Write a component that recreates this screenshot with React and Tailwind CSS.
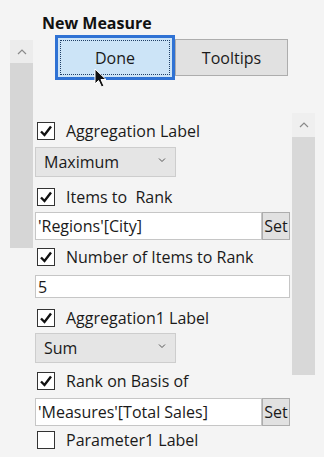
import React from 'react';

const font = { fontFamily: '"Open Sans", "Noto Sans", sans-serif' };

// Windows-style checkbox
const CheckRow = ({ label, checked = true, className = '' }) => (
    <div className={`flex items-center h-7 ${className}`}>
        <div className="w-[18px] h-[18px] ml-[2px] border border-[#333333] bg-white flex items-center justify-center">
            {checked && (
                <svg width="14" height="14" viewBox="0 0 14 14">
                    <path d="M2 7.5 L5.5 11 L12 2.5" fill="none" stroke="#111" strokeWidth="2.4" />
                </svg>
            )}
        </div>
        <span className="ml-[11px] text-[16px] text-[#1a1a1a] whitespace-pre">{label}</span>
    </div>
);

const Dropdown = ({ value, className = '' }) => (
    <div className={`w-[141px] h-[30px] flex items-center justify-between pl-[8px] pr-[9px] bg-[#e5e5e5] border border-[#cdcdcd] ${className}`}>
        <span className="text-[16px] text-[#1a1a1a]">{value}</span>
        <svg width="8" height="6" viewBox="0 0 8 6" className="-mt-[4px]">
            <path d="M1 1.5 L4 4.5 L7 1.5" fill="none" stroke="#555" strokeWidth="1" />
        </svg>
    </div>
);

const SetInput = ({ value, className = '' }) => (
    <div className={`flex h-[28px] ${className}`}>
        <div className="w-[227px] bg-white border border-[#c6c6c6] flex items-center pl-[2px] text-[16px] text-[#1a1a1a]">
            {value}
        </div>
        <div className="w-[28px] bg-[#e1e1e1] border border-[#adadad] flex items-center justify-center text-[16px] text-[#1a1a1a]">
            Set
        </div>
    </div>
);

const UpArrow = () => (
    <svg width="10" height="6" viewBox="0 0 10 6">
        <path d="M1 5 L5 1 L9 5" fill="none" stroke="#8a8a8a" strokeWidth="1.2" />
    </svg>
);

export default function App() {
    return (
        <div className="w-[324px] h-[457px] overflow-hidden bg-[#f4f4f4] flex pl-[10px]" style={font}>
            {/* outer scrollbar */}
            <div className="w-[23px] mt-[40px] flex flex-col">
                <div className="h-[23px] bg-[#ececec] flex items-center justify-center"><UpArrow /></div>
                <div className="h-[185px] bg-[#d6d6d6]" />
            </div>

            <div className="flex-1 pl-[2px]">
                <h1 className="pl-[7px] pt-[13px] text-[16px] leading-[21px] font-bold text-[#111]">New Measure</h1>

                <div className="flex items-center mt-[1px] ml-[20px]">
                    <div className="relative w-[120px] h-[45px] border-[3px] border-[#2f72d4] bg-[#cce4f7] p-[2px]">
                        <div className="w-full h-full border border-dotted border-[#1f3f66] flex items-center justify-center text-[16px] text-[#1a1a1a]">
                            Done
                        </div>
                        <svg className="absolute left-[36px] top-[30px]" width="14" height="21" viewBox="0 0 14 21">
                            <path d="M1 1 L1 16 L4.5 12.5 L7.5 19 L10 18 L7 11.5 L12 11.5 Z" fill="#111" stroke="#fff" strokeWidth="1" />
                        </svg>
                    </div>
                    <div className="w-[113px] h-[37px] bg-[#e1e1e1] border border-[#adadad] flex items-center justify-center text-[16px] text-[#1a1a1a]">
                        Tooltips
                    </div>
                </div>

                {/* inner pane */}
                <div className="flex">
                    <div className="w-[255px] pt-[37px] flex flex-col">
                        <CheckRow label="Aggregation Label" />
                        <Dropdown value="Maximum" className="mt-[2px]" />
                        <CheckRow label="Items to  Rank" className="mt-[6px]" />
                        <SetInput value="'Regions'[City]" className="mt-[1px]" />
                        <CheckRow label="Number of Items to Rank" className="mt-[3px]" />
                        <div className="mt-[4px] h-[23px] bg-white border border-[#c6c6c6] flex items-center pl-[2px] text-[16px] text-[#1a1a1a]">5</div>
                        <CheckRow label="Aggregation1 Label" className="mt-[6px]" />
                        <Dropdown value="Sum" className="mt-[1px]" />
                        <CheckRow label="Rank on Basis of" className="mt-[4px]" />
                        <SetInput value="'Measures'[Total Sales]" className="mt-[3px]" />
                        <CheckRow label="Parameter1 Label" checked={false} />
                    </div>

                    {/* inner scrollbar */}
                    <div className="w-[23px] ml-[2px] mt-[33px] flex flex-col">
                        <div className="h-[24px] bg-[#efefef] flex items-center justify-center"><UpArrow /></div>
                        <div className="h-[238px] bg-[#d8d8d8]" />
                    </div>
                </div>
            </div>
        </div>
    );
}
